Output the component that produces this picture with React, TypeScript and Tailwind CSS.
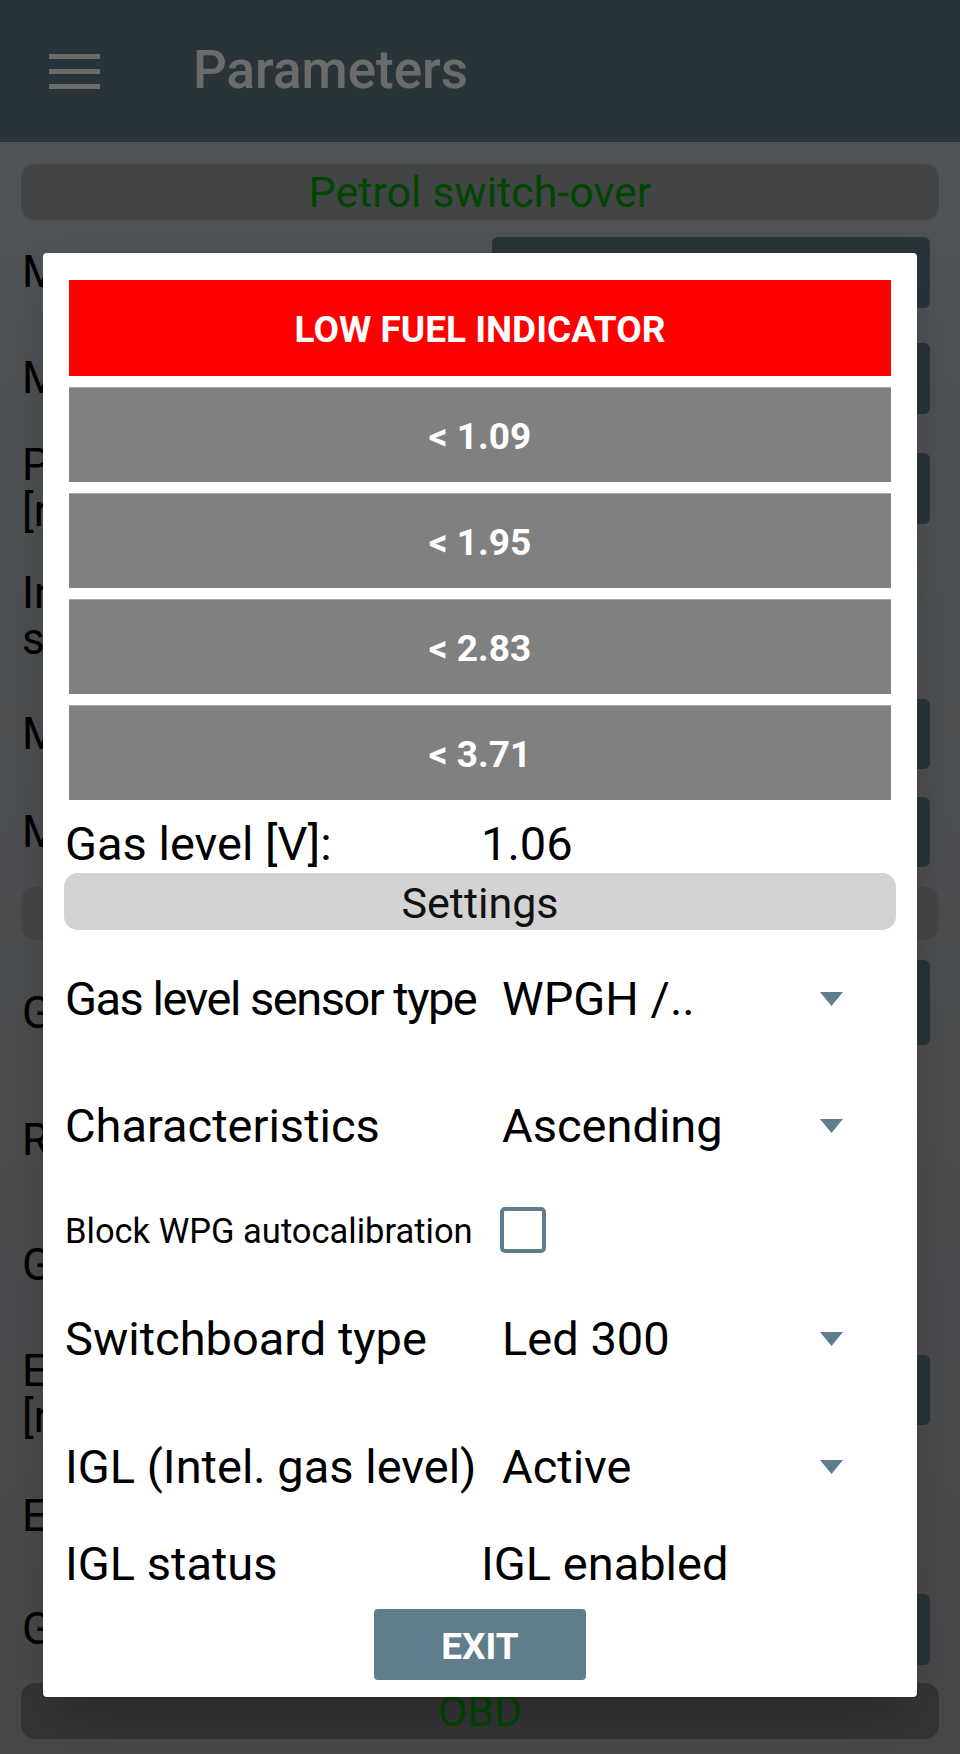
import React from "react";

type BgRow = {
  lines: string[];
  height: string;
  box?: string;
};

const topRows: BgRow[] = [
  { lines: ["Min. reducer temperature"], height: "h-[104px]", box: "h-[71px]" },
  { lines: ["Min. gas pressure"], height: "h-[108px]", box: "h-[71px]" },
  { lines: ["Petrol switch-over speed", "[rpm]"], height: "h-[112px]", box: "h-[71px]" },
  { lines: ["Injection time at", "switch-over"], height: "h-[144px]" },
  { lines: ["Min. switch-over time"], height: "h-[92px]", box: "h-[70px]" },
  { lines: ["Max. petrol time"], height: "h-[104px]", box: "h-[70px]" },
];

const bottomRows: BgRow[] = [
  { lines: ["Gas level sensor"], height: "h-[146px]", box: "h-[85px] self-start mt-[20px]" },
  { lines: ["Reducer temperature"], height: "h-[107px]" },
  { lines: ["Gas temperature"], height: "h-[144px]" },
  { lines: ["Engine speed limit", "[rpm]"], height: "h-[114px]", box: "h-[70px] self-start mt-[18px]" },
  { lines: ["Emergency start"], height: "h-[130px]" },
  { lines: ["Gas injection correction"], height: "h-[96px]", box: "h-[71px]" },
];

const levels = ["1.09", "1.95", "2.83", "3.71"];

const BackgroundRow: React.FC<{ row: BgRow }> = ({ row }) => (
  <div className={`flex ${row.height} items-center`}>
    <div className="min-w-0 flex-1 whitespace-nowrap pl-px text-[44px] leading-[46px] text-black">
      {row.lines.map((line) => (
        <div key={line}>{line}</div>
      ))}
    </div>
    {row.box && <div className={`mr-[9px] ${row.box} w-[438px] shrink-0 rounded-[6px] bg-[#607d8b]`} />}
  </div>
);

const Triangle = () => (
  <svg width="23" height="14" viewBox="0 0 23 14" className="mr-[52px] shrink-0">
    <polygon points="0,0 23,0 11.5,14" fill="#607d8b" />
  </svg>
);

const SpinnerRow: React.FC<{ label: string; value: string; height: string; tight?: boolean }> = ({
  label,
  value,
  height,
  tight,
}) => (
  <div className={`flex ${height} items-center pt-[5px] text-[47px] leading-[54px] text-black`}>
    <span className={`w-[437px] shrink-0 whitespace-nowrap ${tight ? "tracking-[-1.5px]" : ""}`}>{label}</span>
    <span className="flex-1 whitespace-nowrap">{value}</span>
    <Triangle />
  </div>
);

export default function App() {
  return (
    <div className="relative h-[1754px] w-full overflow-hidden bg-linear-to-b from-[#bec8cd] to-[#adadb2] font-[Roboto,sans-serif]">
      {/* page under the dialog */}
      <header className="flex h-[142px] items-center bg-[#607d8b] px-[49px]">
        <div className="flex flex-col gap-[10px]">
          <div className="h-[5px] w-[51px] bg-white" />
          <div className="h-[5px] w-[51px] bg-white" />
          <div className="h-[5px] w-[51px] bg-white" />
        </div>
        <h1 className="ml-[93px] text-[53px] font-medium text-white">Parameters</h1>
      </header>

      <div className="px-[21px] pt-[22px]">
        <div className="flex h-[56px] items-center justify-center rounded-[14px] bg-[#9da2a7] text-[43px] text-[#00a800]">
          Petrol switch-over
        </div>
        {topRows.map((row) => (
          <BackgroundRow key={row.lines[0]} row={row} />
        ))}
        <div className="mt-[3px] flex h-[53px] items-center justify-center rounded-[14px] bg-[#a3a7ab] text-[43px] text-[#00a800]">
          Gas level indicator
        </div>
        {bottomRows.map((row) => (
          <BackgroundRow key={row.lines[0]} row={row} />
        ))}
        <div className="mt-[6px] flex h-[56px] items-center justify-center rounded-[14px] bg-[#7e7e83] text-[43px] text-[#00a800]">
          OBD
        </div>
      </div>

      {/* dim + dialog */}
      <div className="absolute inset-0 flex justify-center bg-black/[0.58] pt-[253px]">
        <div className="flex h-[1444px] w-[874px] flex-col rounded-[4px] bg-white px-[22px] pt-[27px] shadow-2xl">
          <div className="mx-[4px] flex flex-col gap-[11px]">
            <div className="flex h-[96px] items-center justify-center bg-[#ff0000] pt-[4px] text-[37px] font-bold text-white">
              LOW FUEL INDICATOR
            </div>
            {levels.map((v) => (
              <div
                key={v}
                className="flex h-[95px] items-center justify-center border-t border-[#a9a9a9] bg-[#808080] pt-[4px] text-[37px] font-bold text-white"
              >
                &lt; {v}
              </div>
            ))}
          </div>

          <div className="flex h-[73px] items-center pt-[14px] text-[47px] leading-[54px] text-black">
            <span className="w-[416px] shrink-0">Gas level [V]:</span>
            <span>1.06</span>
          </div>

          <div className="-mx-px flex h-[57px] items-center justify-center rounded-[14px] bg-[#d3d3d3] pt-[3px] text-[43px] text-[#111]">
            Settings
          </div>

          <SpinnerRow label="Gas level sensor type" value="WPGH /.." height="h-[132px]" tight />
          <SpinnerRow label="Characteristics" value="Ascending" height="h-[122px]" />

          <div className="flex h-[92px] items-center">
            <span className="w-[435px] shrink-0 whitespace-nowrap pt-[4px] text-[34.5px] text-black">
              Block WPG autocalibration
            </span>
            <div className="h-[46px] w-[46px] rounded-[5px] border-[4px] border-[#607d8b]" />
          </div>

          <SpinnerRow label="Switchboard type" value="Led 300" height="h-[120px]" />
          <SpinnerRow label="IGL (Intel. gas level)" value="Active" height="h-[136px]" />

          <div className="flex h-[58px] items-center pt-[5px] text-[47px] leading-[54px] text-black">
            <span className="w-[416px] shrink-0">IGL status</span>
            <span>IGL enabled</span>
          </div>

          <div className="flex justify-center pt-[19px]">
            <button className="flex h-[71px] w-[212px] items-center justify-center rounded-[4px] bg-[#607d8b] pt-[4px] text-[37px] font-bold text-white">
              EXIT
            </button>
          </div>
        </div>
      </div>
    </div>
  );
}
